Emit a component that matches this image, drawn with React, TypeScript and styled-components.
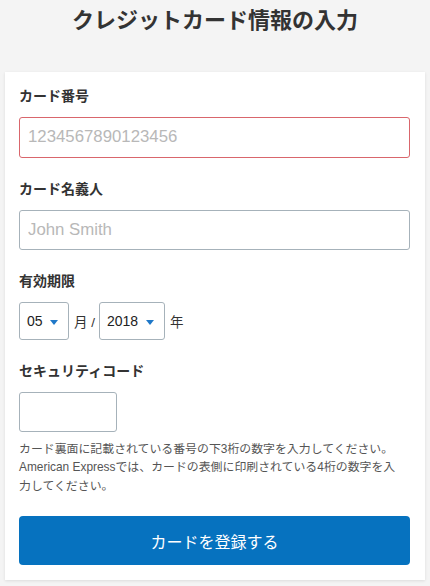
import React, { useState } from 'react';
import styled, { createGlobalStyle } from 'styled-components';

const GlobalStyle = createGlobalStyle`
  html, body {
    margin: 0;
    padding: 0;
    background: #f4f4f4;
  }
  body {
    font-family: "Liberation Sans", "Noto Sans CJK JP", sans-serif;
    color: #333;
  }
`;

const Page = styled.div`
  width: 430px;
  min-height: 586px;
  background: #f4f4f4;
  padding-top: 6px;
  box-sizing: border-box;
`;

const Title = styled.h1`
  margin: 0 0 36px;
  font-size: 22px;
  line-height: 30px;
  font-weight: bold;
  text-align: center;
  color: #333;
`;

const Card = styled.form`
  margin: 0 5px;
  background: #fff;
  padding: 14px 15px 15px 14px;
  box-shadow: 0 1px 3px rgba(0, 0, 0, 0.1);
  display: flex;
  flex-direction: column;
`;

const Field = styled.div<{ $last?: boolean }>`
  display: flex;
  flex-direction: column;
  margin-bottom: ${(p) => (p.$last ? 0 : 21)}px;
`;

const Label = styled.label`
  font-size: 14px;
  line-height: 20px;
  font-weight: bold;
  color: #333;
  margin-bottom: 11px;
`;

const Input = styled.input<{ $error?: boolean; $width?: string }>`
  box-sizing: border-box;
  width: ${(p) => p.$width || '100%'};
  height: 40.5px;
  padding: 0 8px;
  font-family: inherit;
  font-size: 16.8px;
  color: #333;
  background: #fff;
  border: 1px solid ${(p) => (p.$error ? '#d9666c' : '#a6b2ba')};
  border-radius: 3px;
  outline: none;

  &::placeholder {
    color: #b8b8b8;
  }
`;

const ExpiryRow = styled.div`
  display: flex;
  align-items: center;
  font-size: 13.5px;
  color: #333;
`;

const SelectBox = styled.div<{ $width: number }>`
  position: relative;
  box-sizing: border-box;
  width: ${(p) => p.$width}px;
  height: 37.5px;
  border: 1px solid #a6b2ba;
  border-radius: 3px;
  background: #fff;
  display: flex;
  align-items: center;
  padding-left: 7px;
  font-size: 14px;
  color: #222;
`;

const Caret = styled.span`
  position: absolute;
  right: 10px;
  top: 17px;
  width: 0;
  height: 0;
  border-left: 4.5px solid transparent;
  border-right: 4.5px solid transparent;
  border-top: 5px solid #1f78c8;
`;

const Unit = styled.span`
  margin: 0 4px 0 5px;
`;

const Help = styled.p`
  margin: 8px 0 21px;
  font-size: 11.9px;
  line-height: 18.3px;
  color: #555;
`;

const SubmitButton = styled.button`
  height: 49.5px;
  border: none;
  border-radius: 4px;
  background: #0672bf;
  color: #fff;
  font-family: inherit;
  font-size: 16px;
  cursor: pointer;
`;

const App: React.FC = () => {
  const [number, setNumber] = useState('');
  const [name, setName] = useState('');
  const [cvc, setCvc] = useState('');

  return (
    <Page>
      <GlobalStyle />
      <Title>クレジットカード情報の入力</Title>
      <Card onSubmit={(e) => e.preventDefault()}>
        <Field>
          <Label>カード番号</Label>
          <Input
            $error
            value={number}
            onChange={(e) => setNumber(e.target.value)}
            placeholder="1234567890123456"
          />
        </Field>
        <Field>
          <Label>カード名義人</Label>
          <Input value={name} onChange={(e) => setName(e.target.value)} placeholder="John Smith" />
        </Field>
        <Field>
          <Label>有効期限</Label>
          <ExpiryRow>
            <SelectBox $width={50}>
              05
              <Caret />
            </SelectBox>
            <Unit>月 /</Unit>
            <SelectBox $width={66}>
              2018
              <Caret />
            </SelectBox>
            <Unit>年</Unit>
          </ExpiryRow>
        </Field>
        <Field $last>
          <Label>セキュリティコード</Label>
          <Input $width="98px" value={cvc} onChange={(e) => setCvc(e.target.value)} />
        </Field>
        <Help>
          カード裏面に記載されている番号の下3桁の数字を入力してください。American Expressでは、カードの表側に印刷されている4桁の数字を入
          <br />
          力してください。
        </Help>
        <SubmitButton type="submit">カードを登録する</SubmitButton>
      </Card>
    </Page>
  );
};

export default App;
